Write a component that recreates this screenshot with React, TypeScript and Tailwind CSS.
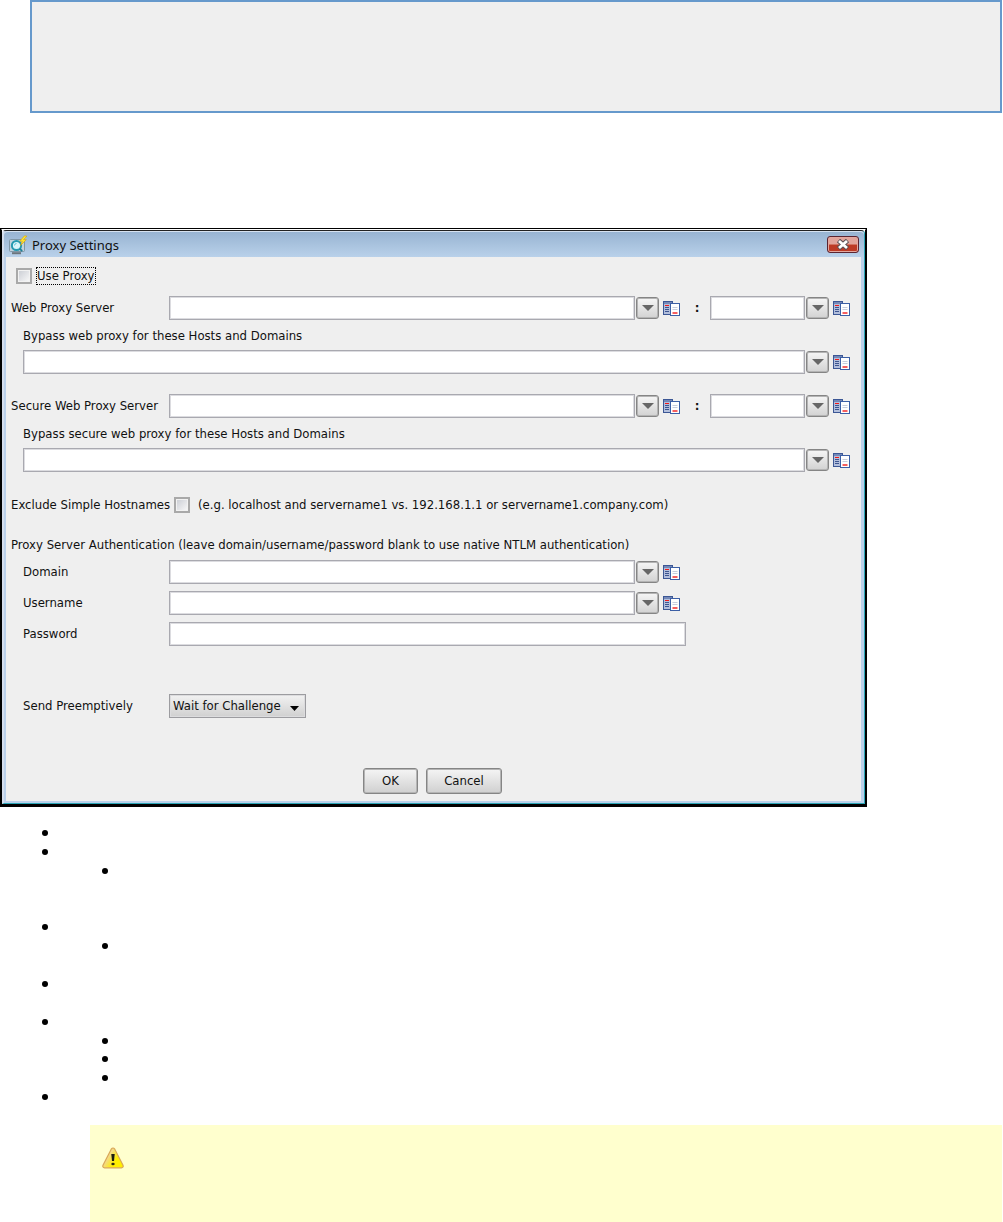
import type { ReactNode } from "react";

const fieldClass = "h-6 min-w-0 border border-[#a9a9b0] bg-white px-1 shadow-[inset_0_0_0_1px_#dcdce0] outline-none";

function ProxyIcon() {
  return (
    <svg width="20" height="20" viewBox="0 0 20 20" aria-hidden="true">
      <rect x="1.5" y="4.5" width="15" height="12" rx="1" fill="#c3d3de" stroke="#7f96a6" />
      <path d="M4 18.2h9" stroke="#6d757c" strokeWidth="2" />
      <circle cx="8.5" cy="10.5" r="4.6" fill="#d9f5fa" stroke="#2499b0" strokeWidth="2" />
      <path d="M6.5 10.5a2 2 0 0 1 2-2" stroke="#5fc5d8" fill="none" />
      <path d="M11.8 13.8l2.4 2.2" stroke="#1d7f96" strokeWidth="1.8" />
      <path d="M16.5.8l-4.8 5.4h2.6l-1.8 4.4 5.8-6h-2.8L19 1.2z" fill="#ffe92e" stroke="#d5a419" strokeWidth=".7" />
    </svg>
  );
}

function CompareIcon() {
  return (
    <svg width="17" height="17" viewBox="0 0 17 17" aria-hidden="true">
      <rect x=".5" y="1.5" width="9" height="13" fill="#b3bfdc" stroke="#3c5795" />
      <path d="M1 2h8v2H1z" fill="#7488b8" />
      <path d="M2 5.500h4" stroke="#f01818" />
      <path d="M2 7.500h4M2 9.500h4M2 11.500h4" stroke="#3d5590" />
      <rect x="7.5" y="3.5" width="9" height="12" fill="#fff" stroke="#3c5fa5" />
      <path d="M9.500 7.500h5M9.500 9.500h5" stroke="#c6cddd" />
      <path d="M9.500 13h5" stroke="#f31919" strokeWidth="1.400" />
    </svg>
  );
}

function WarningIcon() {
  return (
    <svg width="22" height="22" viewBox="0 0 22 22" aria-hidden="true">
      <defs>
        <linearGradient id="warn" x1="0" y1="0" x2="1" y2="0.600">
          <stop offset=".4" stopColor="#f3da86" />
          <stop offset=".75" stopColor="#ffee00" />
        </linearGradient>
      </defs>
      <path
        d="M9.200 2.200q1.800-2.400 3.600 0l8.200 16q.8 2.300-1.600 2.600H2.600Q.2 20.500 1 18.200z"
        fill="url(#warn)"
        stroke="#d9a758"
        strokeWidth="1.200"
      />
      <path d="M9.300 7h3.400l-.7 7h-2z" fill="#1c1c10" />
      <ellipse cx="11" cy="17" rx="1.700" ry="1.300" fill="#2c2a10" />
    </svg>
  );
}

function VariableButtons({ name }: { name: string }) {
  return (
    <>
      <button
        type="button"
        aria-label={`${name} options`}
        className="ml-px flex h-[22px] w-[23px] shrink-0 items-center justify-center rounded-[3px] border border-[#858585] bg-linear-to-b from-[#f6f6f6] to-[#d2d2d2] shadow-[inset_0_0_0_1px_#b4b4b4]"
      >
        <svg width="12" height="6" viewBox="0 0 12 6" aria-hidden="true">
          <path d="M0 0h12L6 6z" fill="#666" />
        </svg>
      </button>
      <button type="button" aria-label={`${name} variables`} className="ml-1 shrink-0">
        <CompareIcon />
      </button>
    </>
  );
}

function ServerRow({ id, label }: { id: string; label: string }) {
  return (
    <div className="flex items-center">
      <label htmlFor={id} className="w-[158px] shrink-0">
        {label}
      </label>
      <input id={id} className={`${fieldClass} flex-1`} />
      <VariableButtons name={label} />
      <span className="w-[30px] shrink-0 pl-1 text-center font-bold">:</span>
      <input aria-label={`${label} port`} className={`${fieldClass} w-[95px] shrink-0`} />
      <VariableButtons name={`${label} port`} />
    </div>
  );
}

function BypassField({ id, label }: { id: string; label: string }) {
  return (
    <div className="mt-2 pl-3">
      <label htmlFor={id} className="block">
        {label}
      </label>
      <div className="mt-1.5 flex items-center">
        <input id={id} className={`${fieldClass} flex-1`} />
        <VariableButtons name={label} />
      </div>
    </div>
  );
}

function AuthRow({ id, label, children }: { id: string; label: string; children: ReactNode }) {
  return (
    <div className="flex items-center pr-[170px] pl-3">
      <label htmlFor={id} className="w-[146px] shrink-0">
        {label}
      </label>
      {children}
    </div>
  );
}

function CheckBox({ id }: { id: string }) {
  return (
    <input
      id={id}
      type="checkbox"
      className="size-4 shrink-0 appearance-none border-2 border-[#a9a9a9] bg-linear-to-br from-[#c9ccd3] to-[#fafafa] shadow-[inset_0_0_0_1px_#f2f2f2]"
    />
  );
}

function DialogButton({ children, className }: { children: ReactNode; className: string }) {
  return (
    <button
      type="button"
      className={`h-[26px] rounded-[3px] border border-[#858585] bg-linear-to-b from-[#f5f5f5] to-[#d0d0d0] shadow-[inset_0_0_0_1px_#b4b4b4] ${className}`}
    >
      {children}
    </button>
  );
}

function ProxyDialog() {
  return (
    <div className="w-full max-w-[867px] border border-black">
      <div className="border-t border-r border-b-2 border-l border-t-white border-r-black border-b-black border-l-black">
        <div className="rounded-t-sm border-t border-r border-b border-l-2 border-t-[#222] border-r-[#2aa5b5] border-b-[#2aa5b5] border-l-[#d5deed] bg-[#bad0ea]">
          {/* Title bar */}
          <div className="flex h-[26px] items-center rounded-t-sm border-t border-[#d6e2f0] bg-linear-to-b from-[#98b4d2] to-[#b9d1ea] pr-[5px] pl-1">
            <ProxyIcon />
            <h1 className="ml-1 flex-1 font-[family-name:'Noto_Sans',sans-serif] text-[13px] leading-4">Proxy Settings</h1>
            <button
              type="button"
              aria-label="Close"
              className="flex h-[17px] w-8 items-center justify-center rounded-[3px] border border-[#5b2430] bg-linear-to-b from-[#e2a49b] from-45% to-[#bd3a25] to-55% shadow-[inset_0_0_0_1px_#e3a79f]"
            >
              <svg width="14" height="11" viewBox="0 0 14 11" aria-hidden="true">
                <path d="M2.500 1.500l9 8M11.500 1.500l-9 8" stroke="#5a5055" strokeWidth="4.800" />
                <path d="M3 2l8 7M11 2l-8 7" stroke="#fff" strokeWidth="2.800" />
              </svg>
            </button>
          </div>

          {/* Form */}
          <form className="mr-[3px] mb-[2px] ml-[2px] bg-[#efefef] pt-[11px] pr-[11px] pb-[7px] pl-[5px]">
            <div className="flex items-center pl-[5px]">
              <CheckBox id="use-proxy" />
              <label htmlFor="use-proxy" className="ml-[5px] outline-1 outline-black outline-dotted">
                Use Proxy
              </label>
            </div>

            <div className="mt-3">
              <ServerRow id="web" label="Web Proxy Server" />
              <BypassField id="web-bypass" label="Bypass web proxy for these Hosts and Domains" />
            </div>
            <div className="mt-5">
              <ServerRow id="secure" label="Secure Web Proxy Server" />
              <BypassField id="secure-bypass" label="Bypass secure web proxy for these Hosts and Domains" />
            </div>

            <div className="mt-[25px] flex items-center">
              <label htmlFor="exclude" className="w-[163px] shrink-0 whitespace-nowrap">
                Exclude Simple Hostnames
              </label>
              <CheckBox id="exclude" />
              <span className="ml-2">
                (e.g. localhost and servername1 vs. 192.168.1.1 or servername1.company.com)
              </span>
            </div>

            <fieldset className="mt-6">
              <legend>
                Proxy Server Authentication (leave domain/username/password blank to use native NTLM authentication)
              </legend>
              <div className="mt-[7px] flex flex-col gap-[7px]">
                <AuthRow id="domain" label="Domain">
                  <input id="domain" className={`${fieldClass} flex-1`} />
                  <VariableButtons name="Domain" />
                </AuthRow>
                <AuthRow id="username" label="Username">
                  <input id="username" className={`${fieldClass} flex-1`} />
                  <VariableButtons name="Username" />
                </AuthRow>
                <AuthRow id="password" label="Password">
                  <input id="password" type="password" className={`${fieldClass} -mr-1.5 flex-1`} />
                </AuthRow>
              </div>
            </fieldset>

            <div className="mt-12">
              <AuthRow id="preemptive" label="Send Preemptively">
                <div className="relative">
                  <select
                    id="preemptive"
                    className="block h-6 w-[137px] appearance-none border border-[#9c9ca0] bg-linear-to-b from-[#f2f2f2] to-[#d0d0d0] pl-[3px] shadow-[inset_0_0_0_1px_#dcdcde]"
                  >
                    <option>Wait for Challenge</option>
                  </select>
                  <svg
                    className="pointer-events-none absolute top-3 right-[7px]"
                    width="9"
                    height="5"
                    viewBox="0 0 9 5"
                    aria-hidden="true"
                  >
                    <path d="M0 0h9L4.500 5z" fill="#000" />
                  </svg>
                </div>
              </AuthRow>
            </div>

            <div className="mt-[50px] flex justify-center gap-2 pl-1">
              <DialogButton className="w-[55px]">OK</DialogButton>
              <DialogButton className="w-[76px]">Cancel</DialogButton>
            </div>
          </form>
        </div>
      </div>
    </div>
  );
}

// nested: second level of the list, height: room for the item's lines
const bullets = [
  { nested: false, height: "h-[19px]" },
  { nested: false, height: "h-[19px]" },
  { nested: true, height: "h-14" },
  { nested: false, height: "h-[19px]" },
  { nested: true, height: "h-[38px]" },
  { nested: false, height: "h-[38px]" },
  { nested: false, height: "h-[19px]" },
  { nested: true, height: "h-[18px]" },
  { nested: true, height: "h-[19px]" },
  { nested: true, height: "h-[19px]" },
  { nested: false, height: "h-[19px]" },
];

export default function App() {
  return (
    <main className="bg-white font-[family-name:'DejaVu_Sans_Condensed','DejaVu_Sans',sans-serif] text-[13px] leading-4 text-[#111]">
      <div className="mr-px ml-[30px] h-[113px] border-2 border-[#6699cc] bg-[#efefef]" />

      <div className="mt-[115px]">
        <ProxyDialog />
      </div>

      <ul className="mt-[17px] pl-[42px]">
        {bullets.map((bullet, i) => (
          <li key={i} className={`flex pt-[6px] ${bullet.height} ${bullet.nested ? "pl-[60px]" : ""}`}>
            <span className="size-1.5 rounded-full bg-black" />
          </li>
        ))}
      </ul>

      <aside className="mt-[18px] mr-px ml-[90px] h-[97px] bg-[#ffffce] pt-[22px] pl-3">
        <WarningIcon />
      </aside>
    </main>
  );
}
